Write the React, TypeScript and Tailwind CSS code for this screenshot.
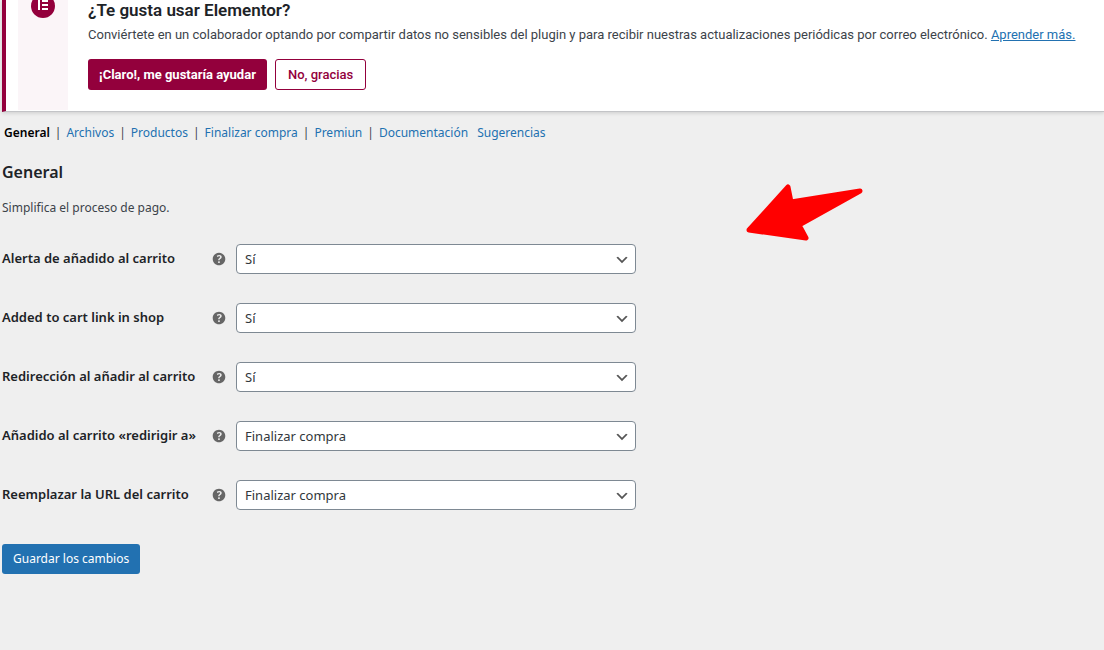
import { Fragment } from "react";

const tabs = ["General", "Archivos", "Productos", "Finalizar compra", "Premiun", "Documentación"];

const yesNo = ["Sí", "No"];
const pages = ["Finalizar compra", "Carrito"];

const fields = [
  { id: "added-alert", label: "Alerta de añadido al carrito", options: yesNo },
  { id: "added-link", label: "Added to cart link in shop", options: yesNo },
  { id: "added-redirect", label: "Redirección al añadir al carrito", options: yesNo },
  { id: "redirect-to", label: "Añadido al carrito «redirigir a»", options: pages },
  { id: "cart-url", label: "Reemplazar la URL del carrito", options: pages },
];

function ElementorLogo() {
  return (
    <svg viewBox="0 0 24 24" className="block size-6" aria-hidden="true">
      <circle cx="12" cy="12" r="12" fill="#93003c" />
      <path d="M7 6h2v10H7zM11 6h6v2h-6zM11 10h6v2h-6zM11 14h6v2h-6z" fill="#fff" />
    </svg>
  );
}

function HelpIcon() {
  return (
    <svg viewBox="0 0 20 20" className="block size-[18px]" aria-hidden="true">
      <path
        fill="#666"
        d="M17 10c0-3.87-3.14-7-7-7-3.87 0-7 3.13-7 7s3.13 7 7 7c3.86 0 7-3.13 7-7zm-6.3 1.48H9.14v-.43c0-.38.08-.7.24-.98s.46-.57.88-.89c.41-.29.68-.53.81-.71.14-.18.2-.39.2-.62 0-.25-.09-.44-.28-.58-.19-.13-.45-.19-.79-.19-.58 0-1.25.19-2 .57l-.64-1.28c.87-.49 1.8-.74 2.77-.74.81 0 1.45.2 1.92.58.48.39.71.91.71 1.55 0 .43-.09.8-.29 1.11-.19.32-.57.67-1.11 1.06-.38.28-.61.49-.71.63-.1.15-.15.34-.15.57v.35zm-1.47 2.74c-.18-.17-.27-.42-.27-.73 0-.33.08-.58.26-.75s.43-.25.77-.25c.32 0 .57.09.75.26s.27.42.27.74c0 .3-.09.55-.27.72-.18.18-.43.27-.75.27-.33 0-.58-.09-.76-.26z"
      />
    </svg>
  );
}

function Field({ id, label, options }: { id: string; label: string; options: string[] }) {
  return (
    <div className="flex h-[30px] items-center">
      <label
        htmlFor={id}
        className="w-[208px] shrink-0 pb-[2px] text-[13px] leading-4 font-semibold whitespace-nowrap text-[#1d2327]"
      >
        {label}
      </label>
      <span className="w-[26px] shrink-0 pb-px">
        <HelpIcon />
      </span>
      <span className="relative block h-full w-full max-w-[400px]">
        <select
          id={id}
          className="block h-full w-full appearance-none rounded-[4px] border border-[#7e8993] bg-white pt-[2px] pr-6 pl-2 text-[13px] text-[#32373c]"
        >
          {options.map((option) => (
            <option key={option}>{option}</option>
          ))}
        </select>
        <svg
          viewBox="0 0 20 20"
          className="pointer-events-none absolute top-2 right-[6px] size-4"
          aria-hidden="true"
        >
          <path d="M5 6l5 5 5-5 2 1-7 7-7-7 2-1z" fill="#555" />
        </svg>
      </span>
    </div>
  );
}

function Notice() {
  return (
    <section className="ml-[2px] flex h-[112px] border-b border-l-4 border-b-[#c3c4c7] border-l-[#93003c] bg-white font-['Roboto',sans-serif] shadow-[0_1px_4px_rgba(0,0,0,0.15)]">
      <div className="mr-5 mb-px ml-3 flex w-[50px] shrink-0 justify-center bg-[#fbf5f8]">
        <div className="-mt-[6px]">
          <ElementorLogo />
        </div>
      </div>
      <div>
        <h2 className="text-[17px] leading-5 font-semibold text-[#1d2327]">¿Te gusta usar Elementor?</h2>
        <p className="mt-[6px] text-[13px] leading-[18px] whitespace-nowrap text-[#3c434a]">
          Conviértete en un colaborador optando por compartir datos no sensibles del plugin y para recibir nuestras
          actualizaciones periódicas por correo electrónico.{" "}
          <a href="#aprender" className="text-[#2271b1] underline">
            Aprender más.
          </a>
        </p>
        <div className="mt-[15px] flex gap-2 text-[13px]">
          <button type="button" className="h-[31px] rounded-[3px] bg-[#93003c] px-[11px] font-bold text-white">
            ¡Claro!, me gustaría ayudar
          </button>
          <button
            type="button"
            className="h-[31px] rounded-[3px] border border-[#93003c] bg-white px-3 font-medium text-[#93003c]"
          >
            No, gracias
          </button>
        </div>
      </div>
    </section>
  );
}

export default function App() {
  return (
    <div className="relative min-h-screen overflow-hidden bg-[#efefef] font-['Noto_Sans',sans-serif] text-[#3c434a]">
      <Notice />
      <main className="pl-[2px]">
        <nav className="mt-[13px] flex gap-[5px] pl-[2px] text-[12px] leading-4 whitespace-nowrap">
          {tabs.map((tab, index) => (
            <Fragment key={tab}>
              {index > 0 && <span>|</span>}
              <a href={`#${tab}`} className={index === 0 ? "font-semibold text-black" : "text-[#2271b1]"}>
                {tab}
              </a>
            </Fragment>
          ))}
          <a href="#sugerencias" className="ml-1 text-[#2271b1]">
            Sugerencias
          </a>
        </nav>
        <h1 className="mt-[19px] text-[16px] leading-6 font-semibold text-[#1d2327]">General</h1>
        <p className="mt-4 text-[12px] leading-4">Simplifica el proceso de pago.</p>
        <form onSubmit={(event) => event.preventDefault()}>
          <div className="mt-7 flex flex-col gap-[29px]">
            {fields.map((field) => (
              <Field key={field.id} {...field} />
            ))}
          </div>
          <button
            type="submit"
            className="mt-[34px] h-[30px] rounded-[3px] bg-[#2271b1] px-[11px] text-[12px] text-white"
          >
            Guardar los cambios
          </button>
        </form>
      </main>
      <svg
        viewBox="0 0 118 58"
        className="pointer-events-none absolute top-[184px] left-[746px] h-[58px] w-[118px]"
        aria-hidden="true"
      >
        <path
          d="M3 46L42 3L45 18L114 7L53 41L60 54Z"
          fill="#f00"
          stroke="#f00"
          strokeWidth="5"
          strokeLinejoin="round"
        />
      </svg>
    </div>
  );
}
